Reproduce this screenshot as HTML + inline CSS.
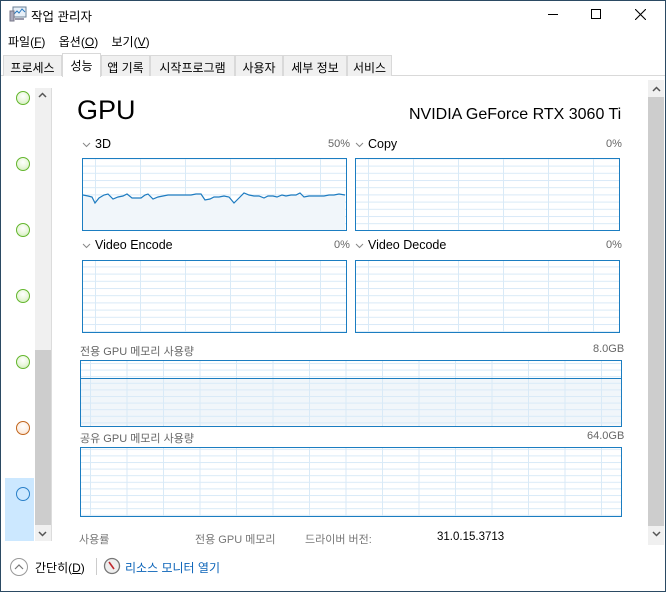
<!DOCTYPE html>
<html><head><meta charset="utf-8"><style>
*{margin:0;padding:0;box-sizing:border-box}
body{width:666px;height:592px;overflow:hidden;background:#fff;font-family:"Liberation Sans","Noto Sans CJK KR",sans-serif;font-size:12px;color:#000;position:relative}
.abs{position:absolute}
.win{position:absolute;left:0;top:0;width:666px;height:592px;border:1px solid #2b4a63}
.tab{position:absolute;top:55px;height:21px;background:#f0f0f0;border:1px solid #d9d9d9;border-bottom:none;font-size:12px;padding:3px 0 0;text-align:center}
.dot{position:absolute;left:16px;width:14px;height:14px;border-radius:50%;border:1px solid #63b62d;background:radial-gradient(circle at 50% 35%,#fff 0%,#eaf7dd 50%,#c9eab0 100%)}
.lbl{position:absolute;font-size:12.5px;color:#000}
.gl{position:absolute;font-size:11px;color:#666}
.chev{position:absolute}
</style></head><body>
<div class="win"></div>
<svg class="abs" style="left:9px;top:6px" width="18" height="16"><rect x="4" y="1" width="13" height="10" fill="#e8f0f8" stroke="#6a7f95"/><polyline points="5,8 8,5 10,7 13,3 16,6" fill="none" stroke="#2a7ac0"/><rect x="1" y="5" width="4" height="10" fill="#aab" stroke="#778"/><rect x="6" y="12" width="9" height="2" fill="#99a"/></svg>
<div class="abs" style="left:31px;top:6px;font-size:12.5px">작업 관리자</div>
<div class="abs" style="left:548px;top:14px;width:10px;height:1px;background:#000"></div>
<div class="abs" style="left:591px;top:9px;width:10px;height:10px;border:1px solid #000"></div>
<svg class="abs" style="left:635px;top:9px" width="11" height="11"><path d="M0 0L11 11M11 0L0 11" stroke="#000" stroke-width="1.1"/></svg>
<div class="abs" style="left:8px;top:33px;font-size:12px">파일(<u>F</u>)&nbsp;&nbsp;&nbsp;&nbsp;옵션(<u>O</u>)&nbsp;&nbsp;&nbsp;&nbsp;보기(<u>V</u>)</div>
<div class="abs" style="left:1px;top:75px;width:664px;height:1px;background:#d9d9d9"></div>
<div class="tab" style="left:3px;width:59px">프로세스</div>
<div class="tab" style="left:62px;top:53px;height:24px;width:39px;background:#fff">성능</div>
<div class="tab" style="left:101px;width:49px">앱 기록</div>
<div class="tab" style="left:150px;width:85px">시작프로그램</div>
<div class="tab" style="left:235px;width:48px">사용자</div>
<div class="tab" style="left:283px;width:64px">세부 정보</div>
<div class="tab" style="left:347px;width:45px">서비스</div>
<div class="abs" style="left:5px;top:478px;width:29px;height:63px;background:#cce8ff"></div>
<div class="dot" style="top:91px"></div>
<div class="dot" style="top:157px"></div>
<div class="dot" style="top:223px"></div>
<div class="dot" style="top:289px"></div>
<div class="dot" style="top:355px"></div>
<div class="dot" style="top:421px;border-color:#c2661d;background:radial-gradient(circle at 50% 35%,#fff 0%,#fdeee2 60%,#f6d2b8 100%)"></div>
<div class="dot" style="top:487px;border-color:#2a80c8;background:#cce8ff"></div>
<div class="abs" style="left:35px;top:88px;width:16px;height:453px;background:#f0f0f0"></div>
<div class="abs" style="left:35px;top:350px;width:16px;height:175px;background:#cdcdcd"></div>
<div class="abs" style="left:51px;top:88px;width:1px;height:453px;background:#dcdcdc"></div>
<svg class="chev" style="left:38px;top:92px" width="9" height="6"><path d="M1 5L4.5 1.5L8 5" fill="none" stroke="#555" stroke-width="1.5"/></svg>
<svg class="chev" style="left:38px;top:531px" width="9" height="6"><path d="M1 1L4.5 4.5L8 1" fill="none" stroke="#555" stroke-width="1.5"/></svg>
<div class="abs" style="left:648px;top:80px;width:16px;height:465px;background:#f0f0f0"></div>
<div class="abs" style="left:648px;top:97px;width:16px;height:429px;background:#cdcdcd"></div>
<svg class="chev" style="left:652px;top:86px" width="9" height="6"><path d="M1 5L4.5 1.5L8 5" fill="none" stroke="#555" stroke-width="1.5"/></svg>
<svg class="chev" style="left:652px;top:531px" width="9" height="6"><path d="M1 1L4.5 4.5L8 1" fill="none" stroke="#555" stroke-width="1.5"/></svg>
<div class="abs" style="left:77px;top:95px;font-size:27px">GPU</div>
<div class="abs" style="left:409px;top:106px;font-size:16px">NVIDIA GeForce RTX 3060 Ti</div>
<svg class="abs" style="left:0;top:0" width="666" height="592"><g fill="none" stroke="#888" stroke-width="1"><path d="M83 143L86.5 146.5L90 143"/><path d="M356 143L359.5 146.5L363 143"/><path d="M83 244L86.5 247.5L90 244"/><path d="M356 244L359.5 247.5L363 244"/></g></svg>
<div class="lbl" style="left:95px;top:137px">3D</div>
<div class="gl" style="left:328px;top:138px">50%</div>
<div class="lbl" style="left:368px;top:137px">Copy</div>
<div class="gl" style="left:606px;top:138px">0%</div>
<div class="lbl" style="left:95px;top:238px">Video Encode</div>
<div class="gl" style="left:334px;top:239px">0%</div>
<div class="lbl" style="left:368px;top:238px">Video Decode</div>
<div class="gl" style="left:606px;top:239px">0%</div>
<div class="gl" style="left:80px;top:343px">전용 GPU 메모리 사용량</div>
<div class="gl" style="left:593px;top:343px">8.0GB</div>
<div class="gl" style="left:80px;top:430px">공유 GPU 메모리 사용량</div>
<div class="gl" style="left:587px;top:430px">64.0GB</div>
<svg class="abs" style="left:0;top:0" width="666" height="592">
<defs>
<pattern id="h" x="0" y="0" width="10" height="7.2" patternUnits="userSpaceOnUse"><line x1="0" y1="0.5" x2="10" y2="0.5" stroke="#d9eaf7"/></pattern>
<pattern id="v" x="95" y="0" width="45" height="10" patternUnits="userSpaceOnUse"><line x1="0.5" y1="0" x2="0.5" y2="10" stroke="#d9eaf7"/></pattern>
<pattern id="v2" x="368" y="0" width="45" height="10" patternUnits="userSpaceOnUse"><line x1="0.5" y1="0" x2="0.5" y2="10" stroke="#d9eaf7"/></pattern>
<pattern id="vm" x="90" y="0" width="36.5" height="10" patternUnits="userSpaceOnUse"><line x1="0.5" y1="0" x2="0.5" y2="10" stroke="#d9eaf7"/></pattern>
<pattern id="hm" x="0" y="0" width="10" height="6.6" patternUnits="userSpaceOnUse"><line x1="0" y1="0.5" x2="10" y2="0.5" stroke="#d9eaf7"/></pattern>
</defs>
<g>
<rect x="82.5" y="158.5" width="264" height="72" fill="url(#h)"/><rect x="82.5" y="158.5" width="264" height="72" fill="url(#v)"/>
<polygon points="83,195 88,196 92,197 95,203 99,198 104,195 108,194 113,199 118,197 123,196 127,194 132,198 137,198 141,198 145,195 148,194 153,199 158,197 163,196 168,195 172,195 177,195 181,195 186,195 191,195 196,194 201,194 205,200 210,199 214,197 219,197 224,196 229,197 234,203 239,198 244,193 249,195 254,196 259,196 264,198 268,196 273,196 277,197 282,195 286,196 291,195 296,195 300,193 304,197 309,196 314,196 319,196 324,196 329,195 334,195 339,194 345,195 345,230 83,230" fill="#f1f6fa"/>
<polyline points="83,195 88,196 92,197 95,203 99,198 104,195 108,194 113,199 118,197 123,196 127,194 132,198 137,198 141,198 145,195 148,194 153,199 158,197 163,196 168,195 172,195 177,195 181,195 186,195 191,195 196,194 201,194 205,200 210,199 214,197 219,197 224,196 229,197 234,203 239,198 244,193 249,195 254,196 259,196 264,198 268,196 273,196 277,197 282,195 286,196 291,195 296,195 300,193 304,197 309,196 314,196 319,196 324,196 329,195 334,195 339,194 345,195" fill="none" stroke="#1d7bc0" stroke-width="1.2"/>
<rect x="82.5" y="158.5" width="264" height="72" fill="none" stroke="#1b7dc1"/>
</g>
<g>
<rect x="355.5" y="158.5" width="264" height="72" fill="url(#h)"/><rect x="355.5" y="158.5" width="264" height="72" fill="url(#v2)"/>
<rect x="355.5" y="158.5" width="264" height="72" fill="none" stroke="#1b7dc1"/>
</g>
<g>
<rect x="82.5" y="260.5" width="264" height="72" fill="url(#h)"/><rect x="82.5" y="260.5" width="264" height="72" fill="url(#v)"/>
<rect x="82.5" y="260.5" width="264" height="72" fill="none" stroke="#1b7dc1"/>
</g>
<g>
<rect x="355.5" y="260.5" width="264" height="72" fill="url(#h)"/><rect x="355.5" y="260.5" width="264" height="72" fill="url(#v2)"/>
<rect x="355.5" y="260.5" width="264" height="72" fill="none" stroke="#1b7dc1"/>
</g>
<g>
<rect x="80.5" y="378.5" width="541" height="47" fill="#f1f6fa"/>
<rect x="80.5" y="360.5" width="541" height="66" fill="url(#hm)"/><rect x="80.5" y="360.5" width="541" height="66" fill="url(#vm)"/>
<line x1="80" y1="378.5" x2="622" y2="378.5" stroke="#1b7dc1"/>
<rect x="80.5" y="360.5" width="541" height="66" fill="none" stroke="#1b7dc1"/>
</g>
<g>
<rect x="80.5" y="447.5" width="541" height="69" fill="url(#hm)"/><rect x="80.5" y="447.5" width="541" height="69" fill="url(#vm)"/>
<rect x="80.5" y="447.5" width="541" height="69" fill="none" stroke="#1b7dc1"/>
</g>
</svg>
<div class="abs" style="left:52px;top:528px;width:596px;height:17px;overflow:hidden">
<div class="abs" style="left:27px;top:3px;color:#777;font-size:11px">사용률</div>
<div class="abs" style="left:143px;top:3px;color:#777;font-size:11px">전용 GPU 메모리</div>
<div class="abs" style="left:253px;top:3px;color:#777;font-size:11px">드라이버 버전:</div>
<div class="abs" style="left:385px;top:3px;font-size:11.5px">31.0.15.3713</div>
</div>
<svg class="abs" style="left:9px;top:557px" width="20" height="20"><circle cx="10" cy="10" r="8.5" fill="#fff" stroke="#999"/><path d="M6 12L10 8L14 12" fill="none" stroke="#777" stroke-width="1.2"/></svg>
<div class="abs" style="left:35px;top:559px;font-size:12px">간단히(<u>D</u>)</div>
<div class="abs" style="left:96px;top:558px;width:1px;height:17px;background:#ccc"></div>
<svg class="abs" style="left:103px;top:557px" width="18" height="18"><circle cx="9" cy="9" r="7.5" fill="#eee" stroke="#777" stroke-width="1.3"/><path d="M6 5L11 12" stroke="#c0282e" stroke-width="1.6"/></svg>
<div class="abs" style="left:125px;top:559px;font-size:12px;color:#0b63b8">리소스 모니터 열기</div>
</body></html>
